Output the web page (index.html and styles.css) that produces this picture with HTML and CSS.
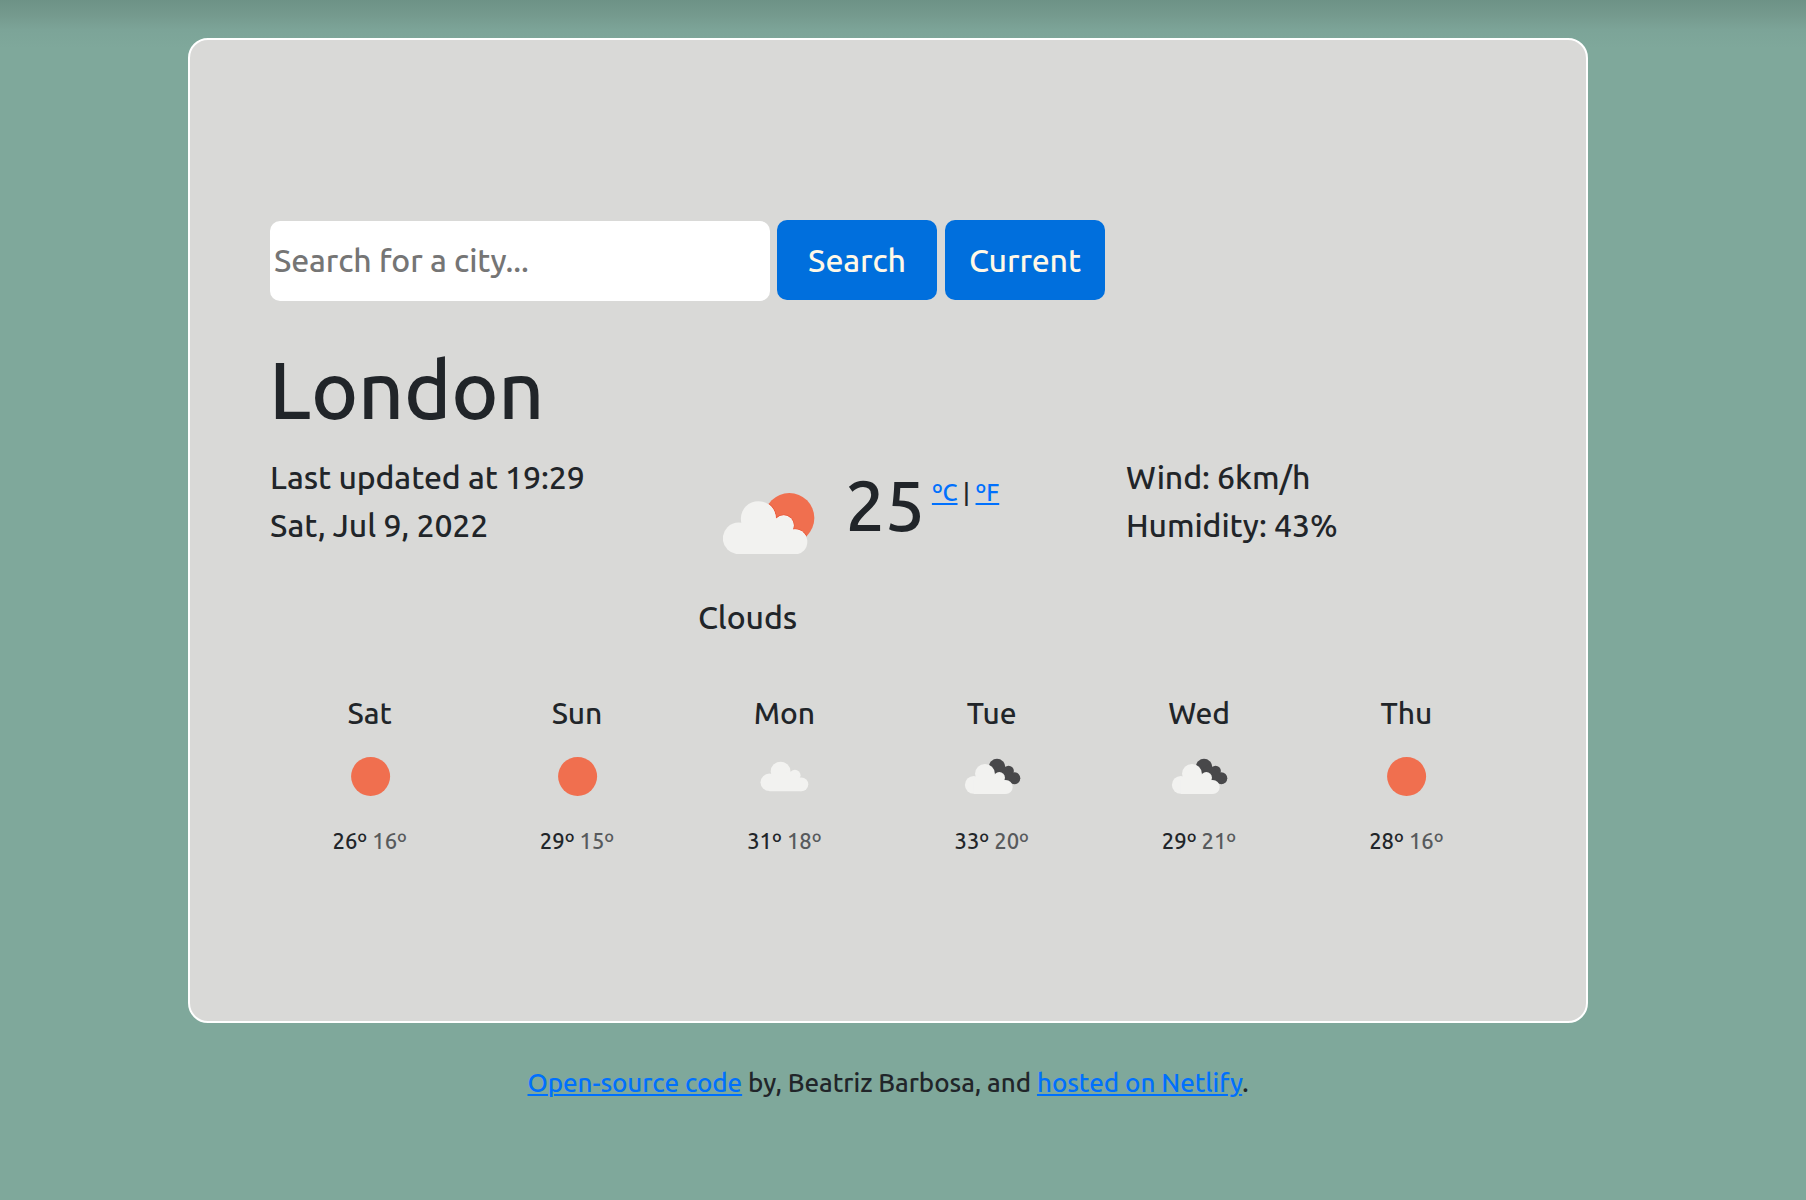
FILE: index.html
```html
<!DOCTYPE html>
<html lang="en">
<head>
<meta charset="utf-8">
<title>Weather</title>
<link rel="stylesheet" href="styles.css">
</head>
<body>
<svg class="defs" aria-hidden="true">
  <defs>
    <g id="cloud">
      <circle cx="47" cy="112" r="47.5"/>
      <circle cx="106" cy="53" r="52.5"/>
      <circle cx="182" cy="74" r="30"/>
      <circle cx="216" cy="123" r="37"/>
      <path d="M47 160V85L106 60 158 55 184 74 216 90V160Z"/>
    </g>
    <g id="broken">
      <g fill="#48484a">
        <circle cx="55" cy="32" r="8.2"/>
        <circle cx="66.6" cy="36" r="5.3"/>
        <circle cx="72.3" cy="43.3" r="6"/>
        <path d="M50 36 61 29 67 36 76 44 68 49 60 45Z"/>
      </g>
      <use href="#cloud" transform="translate(23 28.8) scale(.1885)" fill="#f2f2f0"/>
    </g>
    <clipPath id="sun-clip"><circle cx="199" cy="75" r="75"/></clipPath>
  </defs>
</svg>
<main class="card">
  <form class="search">
    <input class="search-input" type="text" placeholder="Search for a city...">
    <button class="btn" type="button">Search</button>
    <button class="btn" type="button">Current</button>
  </form>
  <h1 class="city">London</h1>
  <section class="overview">
    <div>
      <div>Last updated at 19:29</div>
      <div>Sat, Jul 9, 2022</div>
    </div>
    <div>
      <div class="now">
        <svg class="now-icon" viewBox="0 0 276 183">
          <circle cx="199" cy="75" r="75" fill="#f06f4f"/>
          <g clip-path="url(#sun-clip)">
            <use href="#cloud" y="23" fill="#fafdff" stroke="#e85c3d" stroke-width="5"/>
            <use href="#cloud" y="23" fill="#fafdff"/>
          </g>
          <use href="#cloud" y="24" fill="#f2f2f0"/>
        </svg>
        <span class="temp">25</span>
        <span class="units"><a href="#">ºC</a><span class="bar">|</span><a href="#">ºF</a></span>
      </div>
      <div>Clouds</div>
    </div>
    <div>
      <div>Wind: 6km/h</div>
      <div>Humidity: 43%</div>
    </div>
  </section>
  <section class="forecast">
    <div class="day"><div class="name">Sat</div><svg viewBox="0 0 100 90"><circle cx="50.6" cy="41.4" r="19.5" fill="#f06f4f"/></svg><div class="range">26º <span class="low">16º</span></div></div>
    <div class="day"><div class="name">Sun</div><svg viewBox="0 0 100 90"><circle cx="50.6" cy="41.4" r="19.5" fill="#f06f4f"/></svg><div class="range">29º <span class="low">15º</span></div></div>
    <div class="day"><div class="name">Mon</div><svg viewBox="0 0 100 90"><use href="#cloud" transform="translate(26.6 26.7) scale(.1885 .184)" fill="#f2f2f0"/></svg><div class="range">31º <span class="low">18º</span></div></div>
    <div class="day"><div class="name">Tue</div><svg viewBox="0 0 100 90"><use href="#broken"/></svg><div class="range">33º <span class="low">20º</span></div></div>
    <div class="day"><div class="name">Wed</div><svg viewBox="0 0 100 90"><use href="#broken"/></svg><div class="range">29º <span class="low">21º</span></div></div>
    <div class="day"><div class="name">Thu</div><svg viewBox="0 0 100 90"><circle cx="50.6" cy="41.4" r="19.5" fill="#f06f4f"/></svg><div class="range">28º <span class="low">16º</span></div></div>
  </section>
</main>
<footer class="footer"><a href="#">Open-source code</a> by, Beatriz Barbosa, and <a href="#">hosted on Netlify</a>.</footer>
</body>
</html>
```
FILE: styles.css
```css
* { box-sizing: border-box; }

body {
  margin: 0;
  min-height: 1200px;
  padding: 38px 30px 0 0;
  background: linear-gradient(#6d9286, #74998d 14px, #7ca498 30px, #7fa89b 48px) #7fa89b;
  color: #212529;
  font: 500 32px/48px Ubuntu, "Noto Sans", sans-serif;
  letter-spacing: -.1px;
}

a {
  color: #0070fd;
  text-decoration-thickness: 2px;
  text-underline-offset: 2px;
}

.defs { position: absolute; width: 0; height: 0; }

.card {
  width: 1400px;
  height: 985px;
  margin: 0 auto;
  padding: 180px 80px 0;
  border: 2px solid #fff;
  border-radius: 20px;
  background: #d9d9d7;
}

.search {
  display: flex;
  align-items: flex-start;
}

.search-input {
  width: 500px;
  height: 80px;
  margin: 1px 7px 0 0;
  padding: 0 4px 2px;
  border: 0;
  border-radius: 10px;
  background: #fff;
  font: inherit;
  letter-spacing: -.12px;
}

.search-input::placeholder { color: #757575; opacity: 1; }

.btn {
  width: 160px;
  height: 80px;
  margin-right: 8px;
  padding: 0;
  border: 0;
  border-radius: 10px;
  background: #006fdd;
  color: #fff8e7;
  font: inherit;
  letter-spacing: -.1px;
}

.city {
  margin: 40px 0 16px -1px;
  font-size: 80px;
  font-weight: 500;
  line-height: 96px;
  letter-spacing: -.2px;
}

.overview {
  display: grid;
  grid-template-columns: 428px 428px 1fr;
}

.now {
  display: flex;
  align-items: flex-start;
  height: 140px;
}

.now-icon {
  width: 92px;
  height: 61px;
  margin: 40px 0 0 25px;
}

.temp {
  margin: 2px 0 0 30px;
  font-size: 71px;
  line-height: 100px;
}

.units {
  display: flex;
  margin: 22px 0 0 7px;
  font-size: 24px;
  line-height: 36px;
  letter-spacing: 0;
}

.bar { width: 18px; text-align: center; }

.forecast {
  display: grid;
  grid-template-columns: repeat(6, 1fr);
  margin: 50px -4px 0;
  text-align: center;
}

.name {
  font-size: 30px;
  line-height: 44px;
}

.day svg {
  display: block;
  width: 100px;
  height: 90px;
  margin: 0 auto;
}

.range {
  font-size: 22px;
  line-height: 32px;
  letter-spacing: 0;
}

.low { opacity: .7; }

.footer {
  margin-top: 40px;
  text-align: center;
  font-size: 26px;
  line-height: 39px;
  letter-spacing: -.07px;
}
```
